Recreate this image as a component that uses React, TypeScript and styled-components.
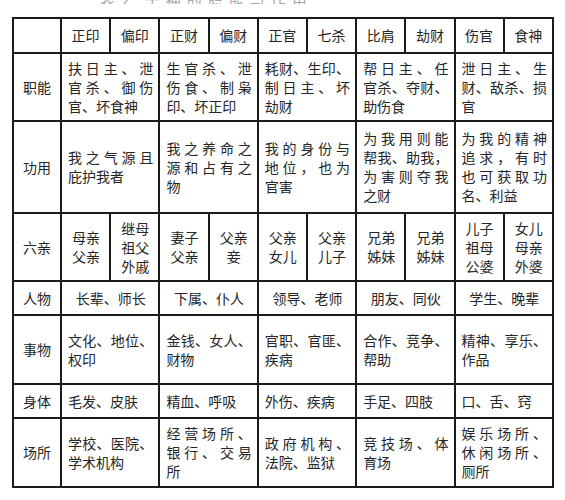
import styled, { createGlobalStyle } from "styled-components";

const GlobalStyle = createGlobalStyle`
    body {
        margin: 0;
        background: #fff;
        font-family: "Noto Sans CJK SC", "Noto Sans", sans-serif;
        color: #262626;
    }
`;

const Page = styled.div`
    padding: 0 0 0 12px;
`;

// the scan only keeps the lower edge of the title line
const Caption = styled.div`
    height: 4px;
    overflow: hidden;
    display: flex;
    align-items: flex-end;
    padding-left: 88px;
    margin-bottom: 13px;
    color: #a8a8a8;
    font-size: 15px;
    letter-spacing: 6px;
`;

const CaptionText = styled.span`
    line-height: 1;
    margin-bottom: -3px;
`;

const Table = styled.table`
    width: 542px;
    table-layout: fixed;
    border-collapse: collapse;
    border: 2px solid #1b1b1b;
    font-size: 14px;
    line-height: 19px;
`;

const Row = styled.tr<{ $h: number }>`
    height: ${(p) => p.$h}px;
`;

const Label = styled.th`
    width: 46px;
    border: 2px solid #1b1b1b;
    font-weight: 400;
    text-align: center;
    vertical-align: middle;
    padding: 0;
`;

const Head = styled.th`
    border: 2px solid #1b1b1b;
    font-weight: 400;
    text-align: center;
    vertical-align: middle;
    padding: 0;
`;

const Cell = styled.td<{ $align?: "left" | "center" }>`
    border: 2px solid #1b1b1b;
    vertical-align: middle;
    padding: 0 5px 0 6px;
    text-align: ${(p) => p.$align ?? "left"};
`;

const Line = styled.span<{ $spread?: boolean }>`
    display: block;
    text-align: ${(p) => (p.$spread ? "justify" : "inherit")};
    text-align-last: ${(p) => (p.$spread ? "justify" : "auto")};
    white-space: nowrap;
`;

const heads = ["正印", "偏印", "正财", "偏财", "正官", "七杀", "比肩", "劫财", "伤官", "食神"];

// each paragraph: all lines but the last are spread across the cell
const Para = ({ lines }: { lines: string[] }) => (
    <>
        {lines.map((l, i) => (
            <Line key={i} $spread={i < lines.length - 1}>
                {l}
            </Line>
        ))}
    </>
);

const duties = [
    ["扶日主、泄", "官杀、御伤", "官、坏食神"],
    ["生官杀、泄", "伤食、制枭", "印、坏正印"],
    ["耗财、生印、", "制日主、坏", "劫财"],
    ["帮日主、任", "官杀、夺财、", "助伤食"],
    ["泄日主、生", "财、敌杀、损", "官"],
];

const uses = [
    ["我之气源且", "庇护我者"],
    ["我之养命之", "源和占有之", "物"],
    ["我的身份与", "地位，也为", "官害"],
    ["为我用则能", "帮我、助我，", "为害则夺我", "之财"],
    ["为我的精神", "追求，有时", "也可获取功", "名、利益"],
];

const kin = [
    ["母亲", "父亲"],
    ["继母", "祖父", "外戚"],
    ["妻子", "父亲"],
    ["父亲", "妾"],
    ["父亲", "女儿"],
    ["父亲", "儿子"],
    ["兄弟", "姊妹"],
    ["兄弟", "姊妹"],
    ["儿子", "祖母", "公婆"],
    ["女儿", "母亲", "外婆"],
];

const people = ["长辈、师长", "下属、仆人", "领导、老师", "朋友、同伙", "学生、晚辈"];

const things = [
    ["文化、地位、", "权印"],
    ["金钱、女人、", "财物"],
    ["官职、官匪、", "疾病"],
    ["合作、竞争、", "帮助"],
    ["精神、享乐、", "作品"],
];

const body = ["毛发、皮肤", "精血、呼吸", "外伤、疾病", "手足、四肢", "口、舌、窍"];

const places = [
    ["学校、医院、", "学术机构"],
    ["经营场所、", "银行、交易", "所"],
    ["政府机构、", "法院、监狱"],
    ["竞技场、体", "育场"],
    ["娱乐场所、", "休闲场所、", "厕所"],
];

export default function App() {
    return (
        <Page>
            <GlobalStyle />
            <Caption>
                <CaptionText>表2 十神的职能与作用</CaptionText>
            </Caption>
            <Table>
                <tbody>
                    <Row $h={35}>
                        <Label />
                        {heads.map((h) => (
                            <Head key={h}>{h}</Head>
                        ))}
                    </Row>
                    <Row $h={68}>
                        <Label>职能</Label>
                        {duties.map((d, i) => (
                            <Cell key={i} colSpan={2}>
                                <Para lines={d} />
                            </Cell>
                        ))}
                    </Row>
                    <Row $h={92}>
                        <Label>功用</Label>
                        {uses.map((d, i) => (
                            <Cell key={i} colSpan={2}>
                                <Para lines={d} />
                            </Cell>
                        ))}
                    </Row>
                    <Row $h={68}>
                        <Label>六亲</Label>
                        {kin.map((k, i) => (
                            <Cell key={i} $align="center">
                                {k.map((w, j) => (
                                    <Line key={j}>{w}</Line>
                                ))}
                            </Cell>
                        ))}
                    </Row>
                    <Row $h={34}>
                        <Label>人物</Label>
                        {people.map((p) => (
                            <Cell key={p} colSpan={2} $align="center">
                                {p}
                            </Cell>
                        ))}
                    </Row>
                    <Row $h={69}>
                        <Label>事物</Label>
                        {things.map((d, i) => (
                            <Cell key={i} colSpan={2}>
                                <Para lines={d} />
                            </Cell>
                        ))}
                    </Row>
                    <Row $h={34}>
                        <Label>身体</Label>
                        {body.map((b) => (
                            <Cell key={b} colSpan={2}>
                                {b}
                            </Cell>
                        ))}
                    </Row>
                    <Row $h={69}>
                        <Label>场所</Label>
                        {places.map((d, i) => (
                            <Cell key={i} colSpan={2}>
                                <Para lines={d} />
                            </Cell>
                        ))}
                    </Row>
                </tbody>
            </Table>
        </Page>
    );
}
